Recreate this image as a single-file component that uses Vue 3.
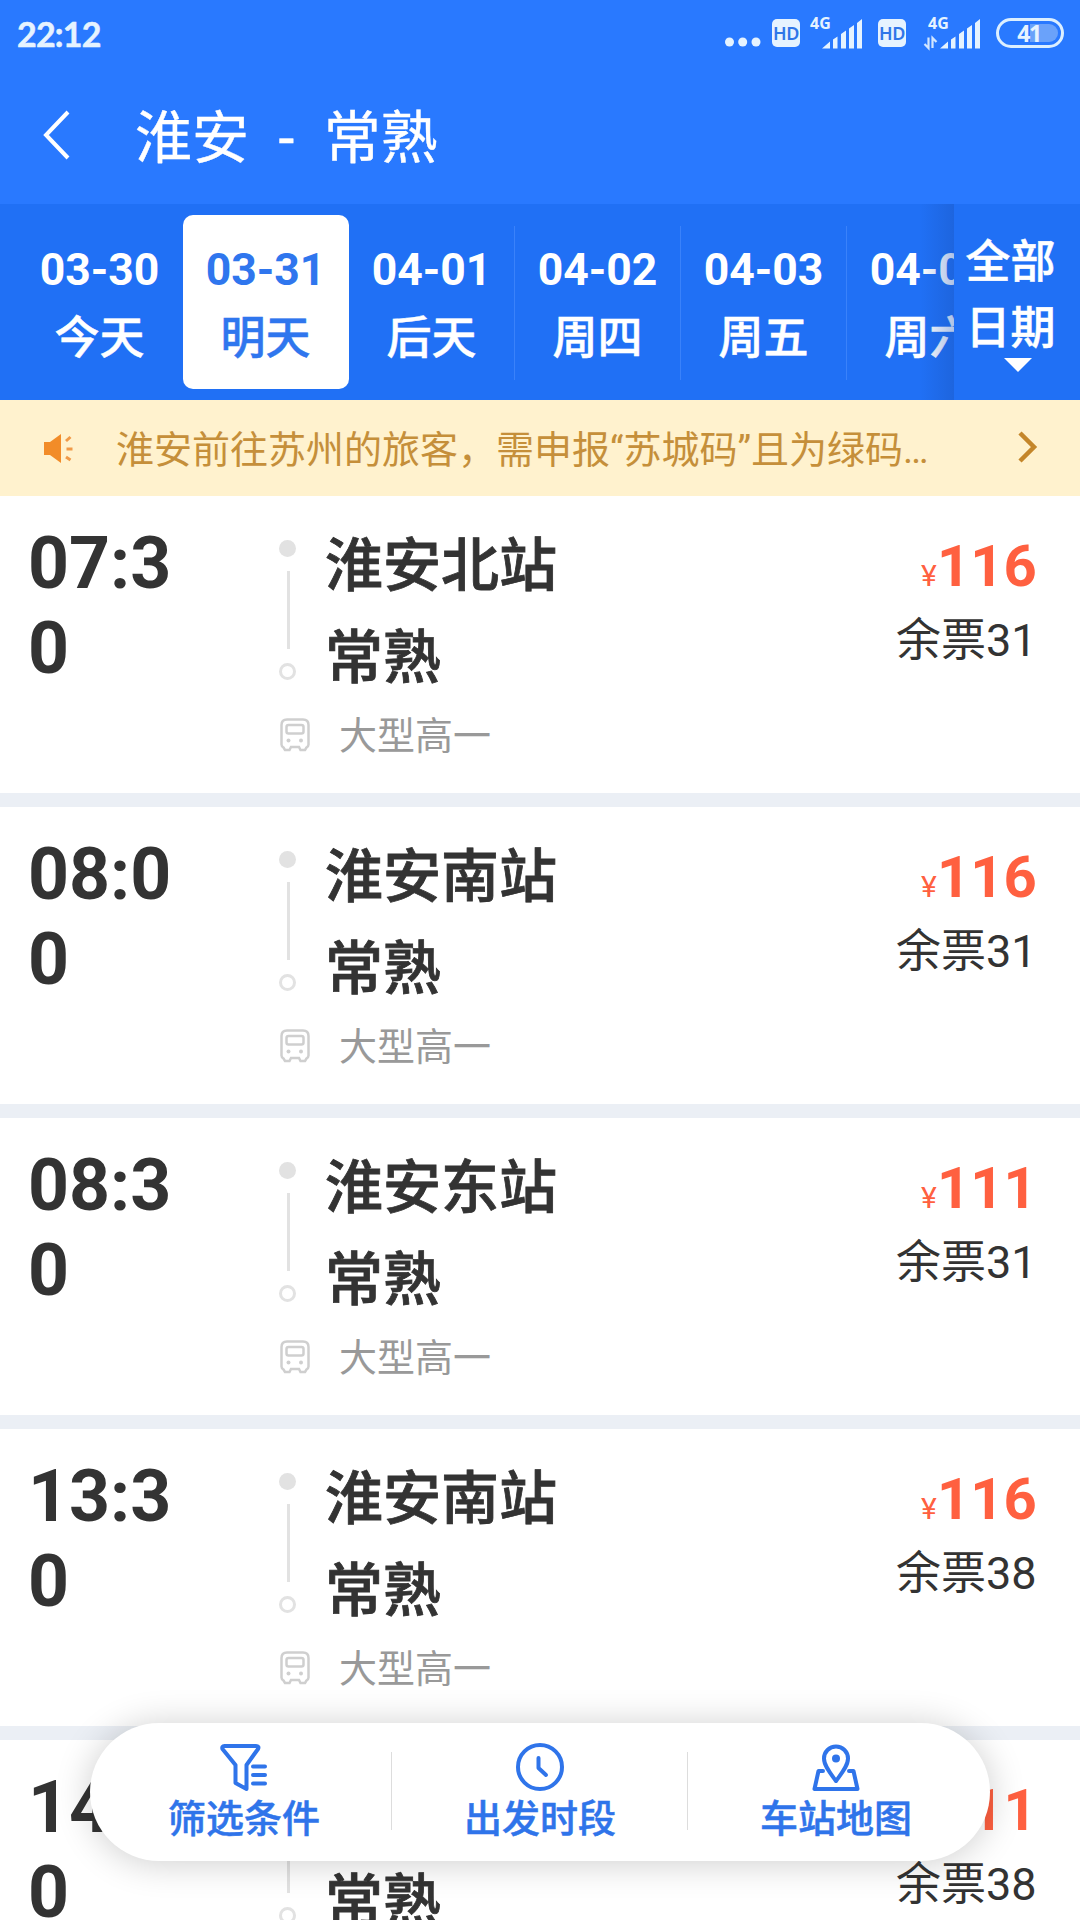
<script setup>
import { ref } from 'vue';

const dates = [
    { date: '03-30', day: '今天' },
    { date: '03-31', day: '明天' },
    { date: '04-01', day: '后天' },
    { date: '04-02', day: '周四' },
    { date: '04-03', day: '周五' },
    { date: '04-04', day: '周六' },
];

const activeDate = ref('03-31');

const trips = [
    { time: '07:30', from: '淮安北站', to: '常熟', type: '大型高一', price: 116, left: 31 },
    { time: '08:00', from: '淮安南站', to: '常熟', type: '大型高一', price: 116, left: 31 },
    { time: '08:30', from: '淮安东站', to: '常熟', type: '大型高一', price: 111, left: 31 },
    { time: '13:30', from: '淮安南站', to: '常熟', type: '大型高一', price: 116, left: 38 },
    { time: '14:30', from: '淮安东站', to: '常熟', type: '大型高一', price: 111, left: 38 },
];

const sims = [
    { id: 1, data: false },
    { id: 2, data: true },
];
</script>

<template>
    <div class="page">
        <header class="header">
            <div class="status-bar">
                <span class="clock">22:12</span>
                <div class="status-icons">
                    <svg class="more" width="36" height="10" viewBox="0 0 36 10">
                        <circle cx="4.5" cy="5" r="4.5" />
                        <circle cx="17.7" cy="5" r="4.5" />
                        <circle cx="31" cy="5" r="4.5" />
                    </svg>
                    <template v-for="sim in sims" :key="sim.id">
                        <span class="hd">HD</span>
                        <svg class="signal" :class="{ data: sim.data }" width="60" height="32" viewBox="0 0 60 32">
                            <text x="0" y="12" class="net">4G</text>
                            <g v-if="sim.data" class="arrows">
                                <path d="M0.500 27L4.500 31V20.500" />
                                <path d="M8.500 31V21L12.500 25" />
                            </g>
                            <path class="bars" d="M12 31.5L20 24.5V31.5ZM23 22.5L27.5 19.5V31.5H23ZM31 17L36 13.5V31.5H31ZM39 11.5L44 8V31.5H39ZM47 6L52 2V31.5H47Z" />
                        </svg>
                    </template>
                    <span class="battery"><i></i><b>41</b></span>
                </div>
            </div>
            <div class="title-bar">
                <svg class="back" width="28" height="50" viewBox="0 0 28 50">
                    <path d="M25 2L3 25L25 48" />
                </svg>
                <h1><span>淮安</span><span>-</span><span>常熟</span></h1>
            </div>
        </header>

        <nav class="date-bar">
            <div class="date-list">
                <button
                    v-for="item in dates"
                    :key="item.date"
                    type="button"
                    class="date-tab"
                    :class="{ active: activeDate === item.date }"
                    @click="activeDate = item.date"
                >
                    <span class="date">{{ item.date }}</span>
                    <span class="day">{{ item.day }}</span>
                </button>
            </div>
            <button type="button" class="all-dates">
                <span>全部</span>
                <span>日期</span>
                <i class="caret"></i>
            </button>
        </nav>

        <div class="notice">
            <svg class="horn" width="30" height="30" viewBox="0 0 30 30">
                <path d="M0 8H6L17 0V29L6 21H0Z" />
                <path class="waves" d="M22 7L26.500 3M22.500 15H28.500M22 23L26.500 26" />
            </svg>
            <p>淮安前往苏州的旅客，需申报“苏城码”且为绿码…</p>
            <svg class="more-arrow" width="20" height="34" viewBox="0 0 20 34">
                <path d="M2 3L16 17L2 31" />
            </svg>
        </div>

        <main class="trips">
            <article v-for="trip in trips" :key="trip.time" class="trip">
                <div class="time">{{ trip.time }}</div>
                <div class="route">
                    <div class="line">
                        <i class="dot"></i>
                        <i class="rail"></i>
                        <i class="dot hollow"></i>
                    </div>
                    <div class="stations">
                        <div>{{ trip.from }}</div>
                        <div>{{ trip.to }}</div>
                    </div>
                    <div class="vehicle">
                        <svg width="30" height="34" viewBox="0 0 30 34">
                            <path d="M7 1.500H23Q28.500 1.500 28.500 7V26.500Q28.500 28.500 26.500 29.500L25 32H20.500L19 29H11L9.500 32H5L3.500 29.500Q1.500 28.500 1.500 26.500V7Q1.500 1.500 7 1.500Z" />
                            <rect x="6.500" y="7" width="17" height="8.500" rx="2" />
                            <circle cx="8.500" cy="22.500" r="2" />
                            <circle cx="21" cy="22.500" r="2" />
                        </svg>
                        <span>{{ trip.type }}</span>
                    </div>
                </div>
                <div class="fare">
                    <div class="price"><small>¥</small>{{ trip.price }}</div>
                    <div class="left">余票{{ trip.left }}</div>
                </div>
            </article>
        </main>

        <div class="toolbar">
            <button type="button">
                <svg width="48" height="48" viewBox="0 0 48 48">
                    <path d="M4.500 3H36Q39.500 3 38 6L26.500 22V46L15.500 40V22L2.500 6Q1.500 3 4.500 3Z" />
                    <path d="M33 23.500H45M33 32H45M33 40.500H45" />
                </svg>
                <span>筛选条件</span>
            </button>
            <button type="button">
                <svg width="48" height="48" viewBox="0 0 48 48">
                    <circle cx="24" cy="24" r="22" />
                    <path d="M22.500 15V25L30 32" />
                </svg>
                <span>出发时段</span>
            </button>
            <button type="button">
                <svg width="48" height="48" viewBox="0 0 48 48">
                    <path d="M24 38C19 31 12 23 12 15.500A12 12 0 0 1 36 15.500C36 23 29 31 24 38Z" />
                    <circle class="solid" cx="24" cy="15.500" r="4" />
                    <path d="M11 28H6.500L2.500 46H45.500L41.500 28H37" />
                </svg>
                <span>车站地图</span>
            </button>
        </div>
    </div>
</template>

<style>
body {
    margin: 0;
    background: #ffffff;
}
</style>

<style scoped>
.page {
    position: relative;
    width: 1080px;
    height: 1920px;
    overflow: hidden;
    background: #ffffff;
    color: #333333;
    font-family: Roboto, "Noto Sans CJK SC", sans-serif;
}

button {
    border: 0;
    padding: 0;
    background: none;
    color: inherit;
    font-family: inherit;
}

.header {
    height: 204px;
    background: #2979ff;
    color: #ffffff;
}

.status-bar {
    display: flex;
    align-items: center;
    justify-content: space-between;
    height: 66px;
    padding: 0 16px 0 17px;
    color: #e6f3ff;
}

.clock {
    font-family: Lato, sans-serif;
    font-size: 34px;
    font-weight: 700;
    letter-spacing: -0.8px;
    -webkit-text-stroke: 0.5px;
}

.status-icons {
    display: flex;
    align-items: center;
    fill: #e6f3ff;
}

.more {
    margin: 18px 11px 0 0;
}

.hd {
    width: 28px;
    height: 28px;
    border-radius: 5px;
    background: #e6f3ff;
    color: #2f76e8;
    font-family: "Noto Sans", sans-serif;
    font-size: 18px;
    font-weight: 600;
    line-height: 29px;
    letter-spacing: -0.5px;
    text-align: center;
}

.signal {
    margin: 0 8px 0 10px;
    overflow: visible;
}

.signal.data {
    margin: 0 12px 0 18px;
}

.signal.data .net,
.signal.data .bars {
    transform: translateX(4px);
}

.net {
    font-family: "Noto Sans", sans-serif;
    font-size: 16px;
    font-weight: 700;
}

.arrows {
    fill: none;
    stroke: #d2e6ff;
    stroke-width: 2.2;
}

.battery {
    position: relative;
    box-sizing: border-box;
    width: 68px;
    height: 30px;
    border: 3px solid #dcefff;
    border-radius: 15px;
    text-align: center;
}

.battery i {
    position: absolute;
    inset: 3px;
    border-radius: 10px;
    background: linear-gradient(90deg, transparent 50%, #6aa2fa 50%);
}

.battery b {
    position: relative;
    left: -1px;
    display: block;
    font-family: "Noto Sans", sans-serif;
    font-size: 23px;
    font-weight: 700;
    line-height: 24px;
    letter-spacing: -1.5px;
}

.title-bar {
    display: flex;
    align-items: center;
    height: 138px;
    padding-left: 43px;
}

.back {
    fill: none;
    stroke: #ffffff;
    stroke-width: 4;
}

h1 {
    display: flex;
    gap: 29.5px;
    margin: 7px 0 0 64px;
    font-size: 57px;
    font-weight: 400;
    line-height: 80px;
    -webkit-text-stroke: 0.4px;
}

.date-bar {
    position: relative;
    height: 196px;
    background: #2070f5;
    color: #ffffff;
}

.date-list {
    display: flex;
    padding: 11px 0 0 17px;
    overflow: hidden;
}

.date-tab {
    position: relative;
    display: flex;
    flex: none;
    flex-direction: column;
    align-items: center;
    width: 166px;
    height: 174px;
    padding: 21px 1px 0 0;
    border-radius: 10px;
    font-size: 45px;
    line-height: 68px;
}

.date {
    font-size: 44.5px;
    font-weight: 700;
}

.day {
    margin-top: 1px;
    font-weight: 500;
    -webkit-text-stroke: 0.5px;
}

.date-tab + .date-tab::before {
    content: "";
    position: absolute;
    top: 11px;
    left: -1px;
    width: 1px;
    height: 154px;
    background: #3a82fa;
}

.date-tab.active {
    background: #ffffff;
    color: #2f76ee;
}

.date-tab.active::before,
.date-tab.active + .date-tab::before {
    display: none;
}

.all-dates {
    position: absolute;
    top: 0;
    right: 0;
    display: flex;
    flex-direction: column;
    align-items: center;
    width: 126px;
    height: 196px;
    padding: 26px 13px 0 0;
    background: #2070f5;
    font-size: 45px;
    font-weight: 500;
    line-height: 66px;
    -webkit-text-stroke: 0.5px;
}

.all-dates::before {
    content: "";
    position: absolute;
    top: 0;
    right: 100%;
    width: 34px;
    height: 100%;
    background: linear-gradient(90deg, rgba(20, 70, 160, 0), rgba(25, 80, 180, 0.35));
}

.caret {
    margin: -4px 0 0 14px;
    border: 14px solid transparent;
    border-top-color: #ffffff;
    border-bottom: 0;
}

.notice {
    display: flex;
    align-items: center;
    height: 96px;
    padding: 0 42px 0 44px;
    background: #fff2ce;
    color: #c58f3a;
}

.horn {
    margin-top: 2px;
    fill: #f28c28;
}

.waves {
    stroke: #f09a48;
    stroke-width: 3;
}

.notice p {
    flex: 1;
    margin: 4px 0 0 42px;
    font-size: 38px;
    line-height: 56px;
}

.more-arrow {
    margin-bottom: 2px;
    fill: none;
    stroke: #c4862a;
    stroke-width: 4.5;
}

.trip {
    display: flex;
    box-sizing: border-box;
    height: 311px;
    padding: 24px 44px 0 28px;
    border-bottom: 14px solid #ebeff5;
}

.time {
    width: 150px;
    margin-top: 1px;
    font-size: 71.5px;
    font-weight: 700;
    line-height: 85px;
    word-break: break-all;
}

.route {
    display: grid;
    flex: 1;
    grid-template-columns: 46px 1fr;
    align-content: start;
    margin-left: 101px;
}

.line {
    display: flex;
    flex-direction: column;
    align-items: center;
    justify-content: space-between;
    width: 17px;
    height: 140px;
    margin-top: 20px;
}

.dot {
    box-sizing: border-box;
    width: 17px;
    height: 17px;
    border-radius: 50%;
    background: #e2e2e2;
}

.dot.hollow {
    border: 3px solid #e2e2e2;
    background: none;
}

.rail {
    width: 3px;
    height: 78px;
    margin-left: 2px;
    background: #e2e2e2;
}

.stations {
    font-size: 58px;
    font-weight: 500;
    line-height: 92px;
    -webkit-text-stroke: 0.8px;
}

.vehicle {
    display: flex;
    grid-column: 1 / 3;
    align-items: center;
    margin-top: 4px;
    padding-left: 1px;
    color: #999999;
    font-size: 38px;
    line-height: 56px;
}

.vehicle svg {
    margin: 0 29px 3px 0;
    fill: none;
    stroke: #cfcfcf;
    stroke-width: 2.5;
}

.vehicle circle {
    fill: #cfcfcf;
    stroke: none;
}

.fare {
    width: 139px;
    white-space: nowrap;
}

.price {
    padding: 12px 0 0 24px;
    color: #ff6040;
    font-size: 58px;
    font-weight: 700;
    line-height: 68px;
}

.price small {
    display: inline-block;
    width: 16px;
    font-size: 30px;
    font-weight: 400;
}

.left {
    margin: -1px 0 0 -1px;
    font-size: 45px;
    line-height: 64px;
}

/* floating filter bar */
.toolbar {
    position: absolute;
    top: 1723px;
    left: 90px;
    display: flex;
    box-sizing: border-box;
    width: 900px;
    height: 138px;
    padding: 0 6px;
    border-radius: 69px;
    background: #ffffff;
    box-shadow: 0 2px 36px rgba(0, 0, 0, 0.2);
    color: #2f74ea;
}

.toolbar button {
    position: relative;
    display: flex;
    flex: 1;
    flex-direction: column;
    align-items: center;
    padding-top: 20px;
    font-size: 38px;
    font-weight: 500;
    line-height: 56px;
    -webkit-text-stroke: 0.5px;
}

.toolbar button + button::before {
    content: "";
    position: absolute;
    top: 29px;
    left: -1px;
    width: 1px;
    height: 78px;
    background: #dddddd;
}

.toolbar svg {
    fill: none;
    stroke: #2f74ea;
    stroke-width: 4;
    stroke-linecap: round;
    stroke-linejoin: round;
}

.toolbar .solid {
    fill: #2f74ea;
    stroke: none;
}
</style>
